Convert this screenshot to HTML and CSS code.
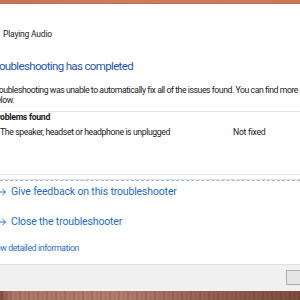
FILE: index.html
```html
<!DOCTYPE html>
<html lang="en">
<head>
    <meta charset="UTF-8">
    <title>Playing Audio troubleshooter</title>
    <link rel="stylesheet" href="styles.css">
</head>
<body>
    <div class="wallpaper-top"></div>
    <div class="dialog">
        <div class="content">
            <div class="title">Playing Audio</div>
            <h1 class="main-instruction">Troubleshooting has completed</h1>
            <p class="summary">Troubleshooting was unable to automatically fix all of the issues found. You can find more details below.</p>
            <div class="problems">
                <div class="problems-head">Problems found</div>
                <div class="problem-row">
                    <span class="problem-name">The speaker, headset or headphone is unplugged</span>
                    <span class="problem-status">Not fixed</span>
                </div>
            </div>
            <div class="separator"></div>
            <a class="command-link first">
                <svg class="arrow" width="8" height="8" viewBox="0 0 8 8"><path d="M0 4h6.5M3.5 1l3 3-3 3" fill="none" stroke="#2f74c8" stroke-width="1"/></svg>
                <span>Give feedback on this troubleshooter</span>
            </a>
            <a class="command-link">
                <svg class="arrow" width="8" height="8" viewBox="0 0 8 8"><path d="M0 4h6.5M3.5 1l3 3-3 3" fill="none" stroke="#2f74c8" stroke-width="1"/></svg>
                <span>Close the troubleshooter</span>
            </a>
            <a class="details-link">View detailed information</a>
        </div>
        <div class="footer">
            <button class="close-button">Close</button>
        </div>
    </div>
    <div class="wallpaper-bottom"></div>
</body>
</html>
```

FILE: styles.css
```css
body {
    margin: 0;
    width: 300px;
    height: 300px;
    overflow: hidden;
    font-family: Roboto, 'Noto Sans', sans-serif;
    background: #9c6454;
    color: #1a1a1a;
}
.wallpaper-top {
    height: 3px;
    background: linear-gradient(90deg, #c27457, #cc7e5f 40%, #c9785a);
    border-bottom: 1px solid #b86c52;
}
.dialog {
    background: #fff;
    height: 287px;
    display: flex;
    flex-direction: column;
}
.content {
    flex: 1;
    padding-top: 24px;
    overflow: hidden;
    white-space: nowrap;
}
.title {
    margin-left: 3px;
    font-size: 8.5px;
    line-height: 12px;
    letter-spacing: -0.2px;
}
.main-instruction {
    margin: 18px 0 0 -10px;
    font-size: 11.5px;
    font-weight: normal;
    line-height: 16px;
    letter-spacing: -0.65px;
    color: #2457b0;
}
.summary {
    margin: 11px 0 0 -8px;
    width: 350px;
    font-size: 8.7px;
    line-height: 10px;
    letter-spacing: -0.45px;
    white-space: normal;
}
.problems {
    margin-top: 6px;
    height: 62px;
    border-top: 1px solid #e3e3e3;
    border-bottom: 1px solid #e3e3e3;
    font-size: 8.7px;
    line-height: 11px;
    letter-spacing: -0.4px;
}
.problems-head {
    margin-left: -8px;
    font-weight: bold;
    letter-spacing: -0.3px;
}
.problem-row {
    display: flex;
    margin-top: 4px;
}
.problem-name {
    width: 233px;
}
.problem-status {
    letter-spacing: -0.3px;
}
.separator {
    margin-top: 4px;
    height: 0;
    border-top: 1px solid #d3e3f3;
    border-bottom: 1px dashed #b2b2b2;
}
.command-link {
    display: flex;
    align-items: center;
    gap: 4px;
    margin-top: 16px;
    font-size: 10.5px;
    line-height: 14px;
    letter-spacing: -0.15px;
    color: #1f6cc4;
}
.command-link.first {
    margin-top: 4px;
}
.arrow {
    width: 8px;
    height: 8px;
    margin-left: -1px;
}
.details-link {
    display: block;
    margin: 14px 0 0 -11px;
    font-size: 8.7px;
    line-height: 11px;
    letter-spacing: -0.35px;
    color: #2a6dc6;
}
.footer {
    height: 27px;
    box-sizing: border-box;
    padding-top: 5px;
    background: #f0f0f0;
    border-top: 1px solid #dfdfdf;
    display: flex;
    justify-content: flex-end;
    align-items: flex-start;
}
.close-button {
    width: 80px;
    height: 15px;
    margin-right: -66px;
    border: 1px solid #adadad;
    background: #e5e5e5;
    font-size: 9px;
    padding: 0;
}
.wallpaper-bottom {
    height: 9px;
    background:
        repeating-linear-gradient(90deg, rgba(60, 30, 20, 0) 0, rgba(60, 30, 20, 0.25) 2px, rgba(60, 30, 20, 0) 4px, rgba(60, 30, 20, 0.15) 7px, rgba(60, 30, 20, 0) 9px),
        linear-gradient(90deg, #8a5446 0, #b47c6c 4%, #b88272 40%, #9a6456 70%, #80503f 100%);
}
```
